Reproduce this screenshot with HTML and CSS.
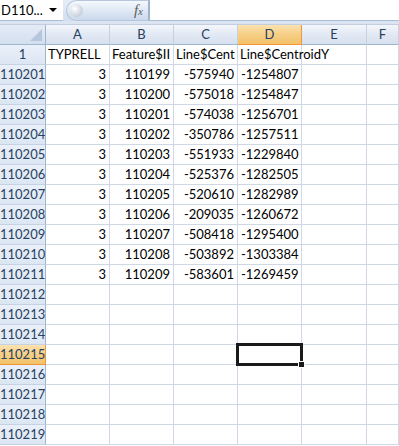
FILE: index.html
```html
<!DOCTYPE html>
<html lang="en">
<head>
    <meta charset="UTF-8">
    <title>Sheet1</title>
    <link rel="stylesheet" href="styles.css">
</head>
<body>
    <div class="formula-bar">
        <div class="name-box">
            <span class="name-text">D110...</span>
            <span class="name-arrow"></span>
        </div>
        <div class="fx-pill">
            <span class="fx-knob"></span>
            <span class="fx"><i>f</i><small>x</small></span>
        </div>
        <div class="formula-input"></div>
    </div>
    <div class="band"></div>

    <div class="sheet">
        <div class="hd corner"><span class="corner-tri"></span></div>
        <div class="hd col">A</div>
        <div class="hd col">B</div>
        <div class="hd col">C</div>
        <div class="hd col sel">D</div>
        <div class="hd col">E</div>
        <div class="hd col">F</div>

        <div class="hd row">1</div>
        <div class="c txt">TYPRELL</div>
        <div class="c txt">Feature$II</div>
        <div class="c txt">Line$Cent</div>
        <div class="c txt spill">Line$CentroidY</div>
        <div class="c"></div>
        <div class="c"></div>

        <div class="hd row">110201</div><div class="c">3</div><div class="c">110199</div><div class="c">-575940</div><div class="c">-1254807</div><div class="c"></div><div class="c"></div>
        <div class="hd row">110202</div><div class="c">3</div><div class="c">110200</div><div class="c">-575018</div><div class="c">-1254847</div><div class="c"></div><div class="c"></div>
        <div class="hd row">110203</div><div class="c">3</div><div class="c">110201</div><div class="c">-574038</div><div class="c">-1256701</div><div class="c"></div><div class="c"></div>
        <div class="hd row">110204</div><div class="c">3</div><div class="c">110202</div><div class="c">-350786</div><div class="c">-1257511</div><div class="c"></div><div class="c"></div>
        <div class="hd row">110205</div><div class="c">3</div><div class="c">110203</div><div class="c">-551933</div><div class="c">-1229840</div><div class="c"></div><div class="c"></div>
        <div class="hd row">110206</div><div class="c">3</div><div class="c">110204</div><div class="c">-525376</div><div class="c">-1282505</div><div class="c"></div><div class="c"></div>
        <div class="hd row">110207</div><div class="c">3</div><div class="c">110205</div><div class="c">-520610</div><div class="c">-1282989</div><div class="c"></div><div class="c"></div>
        <div class="hd row">110208</div><div class="c">3</div><div class="c">110206</div><div class="c">-209035</div><div class="c">-1260672</div><div class="c"></div><div class="c"></div>
        <div class="hd row">110209</div><div class="c">3</div><div class="c">110207</div><div class="c">-508418</div><div class="c">-1295400</div><div class="c"></div><div class="c"></div>
        <div class="hd row">110210</div><div class="c">3</div><div class="c">110208</div><div class="c">-503892</div><div class="c">-1303384</div><div class="c"></div><div class="c"></div>
        <div class="hd row">110211</div><div class="c">3</div><div class="c">110209</div><div class="c">-583601</div><div class="c">-1269459</div><div class="c"></div><div class="c"></div>

        <div class="hd row">110212</div><div class="c"></div><div class="c"></div><div class="c"></div><div class="c"></div><div class="c"></div><div class="c"></div>
        <div class="hd row">110213</div><div class="c"></div><div class="c"></div><div class="c"></div><div class="c"></div><div class="c"></div><div class="c"></div>
        <div class="hd row">110214</div><div class="c"></div><div class="c"></div><div class="c"></div><div class="c"></div><div class="c"></div><div class="c"></div>
        <div class="hd row sel">110215</div><div class="c"></div><div class="c"></div><div class="c"></div><div class="c active"></div><div class="c"></div><div class="c"></div>
        <div class="hd row">110216</div><div class="c"></div><div class="c"></div><div class="c"></div><div class="c"></div><div class="c"></div><div class="c"></div>
        <div class="hd row">110217</div><div class="c"></div><div class="c"></div><div class="c"></div><div class="c"></div><div class="c"></div><div class="c"></div>
        <div class="hd row">110218</div><div class="c"></div><div class="c"></div><div class="c"></div><div class="c"></div><div class="c"></div><div class="c"></div>
        <div class="hd row">110219</div><div class="c"></div><div class="c"></div><div class="c"></div><div class="c"></div><div class="c"></div><div class="c"></div>
    </div>
</body>
</html>
```

FILE: styles.css
```css
body {
    margin: 0;
    width: 399px;
    height: 446px;
    overflow: hidden;
    background-color: #ffffff;
    font-family: Lato, "Liberation Sans", sans-serif;
    font-size: 13px;
    color: #000000;
}

/* formula bar */
.formula-bar {
    display: flex;
    height: 21px;
    background: linear-gradient(#e6edf7, #d3dfee);
}

.name-box {
    width: 63px;
    display: flex;
    align-items: center;
    justify-content: space-between;
    background-color: #ffffff;
    border-bottom: 1px solid #a9bdd6;
    box-sizing: border-box;
    padding: 0 6px 0 1px;
}

.name-text {
    font-size: 13px;
    color: #000000;
}

.name-arrow {
    width: 0;
    height: 0;
    border-left: 4px solid transparent;
    border-right: 4px solid transparent;
    border-top: 4px solid #000000;
}

.fx-pill {
    margin-left: 3px;
    width: 83px;
    display: flex;
    align-items: center;
    justify-content: space-between;
    padding: 0 5px 0 3px;
    box-sizing: border-box;
    border-radius: 11px 0 0 11px;
    border: 1px solid #b6c6dc;
    border-right-color: #9fb2cc;
    background: linear-gradient(#f5f8fc, #dde7f4 55%, #cbd9ec);
}

.fx-knob {
    width: 13px;
    height: 13px;
    border-radius: 50%;
    background: radial-gradient(circle at 35% 35%, #ffffff, #c9d0da 70%, #a8b1be);
}

.fx {
    font-family: "Liberation Serif", serif;
    color: #5c5c5c;
    font-size: 15px;
}

.fx small {
    font-size: 11px;
    font-style: italic;
}

.formula-input {
    flex: 1;
    background-color: #ffffff;
    border-left: 1px solid #9fb2cc;
    border-bottom: 1px solid #a9bdd6;
}

.band {
    height: 3px;
    background-color: #dbe4f1;
    border-bottom: 1px solid #c3cfdf;
}

/* grid */
.sheet {
    display: grid;
    grid-template-columns: 46px 64px 64px 64px 64px 65px 1fr;
    grid-auto-rows: 20px;
}

.c {
    border-right: 1px solid #d0d7e5;
    border-bottom: 1px solid #d0d7e5;
    padding: 0 3px;
    line-height: 19px;
    text-align: right;
    white-space: nowrap;
    overflow: hidden;
    position: relative;
}

.c.txt {
    text-align: left;
    padding: 0 2px;
}

.c.spill {
    overflow: visible;
    z-index: 1;
}

.hd {
    background: linear-gradient(#eaf0f9, #dce6f3);
    border-right: 1px solid #9eb6ce;
    border-bottom: 1px solid #9eb6ce;
    color: #27415f;
    text-align: center;
    line-height: 19px;
    white-space: nowrap;
    overflow: hidden;
}

.hd.col {
    background: linear-gradient(#f3f6fb, #e2e9f4 50%, #d6e0ee);
    border-right-color: #c5d2e3;
}

.hd.row {
    border-bottom-color: #c5d2e3;
}

.hd.sel {
    background: linear-gradient(#fbe2b0, #f6cf86 50%, #f3c26a);
    border-right-color: #f29536;
    border-bottom-color: #f29536;
}

.corner {
    position: relative;
    background: linear-gradient(#e4ebf6, #d4dfee);
}

.corner-tri {
    position: absolute;
    right: 3px;
    bottom: 3px;
    width: 0;
    height: 0;
    border-left: 12px solid transparent;
    border-bottom: 12px solid #b6c6dc;
}

.c.active {
    overflow: visible;
    z-index: 2;
}

.c.active::before {
    content: "";
    position: absolute;
    left: -2px;
    top: -2px;
    right: -2px;
    bottom: -2px;
    border: 3px solid #1a1a1a;
}

.c.active::after {
    content: "";
    position: absolute;
    right: -4px;
    bottom: -4px;
    width: 5px;
    height: 5px;
    background-color: #1a1a1a;
    border: 1px solid #ffffff;
}
```
